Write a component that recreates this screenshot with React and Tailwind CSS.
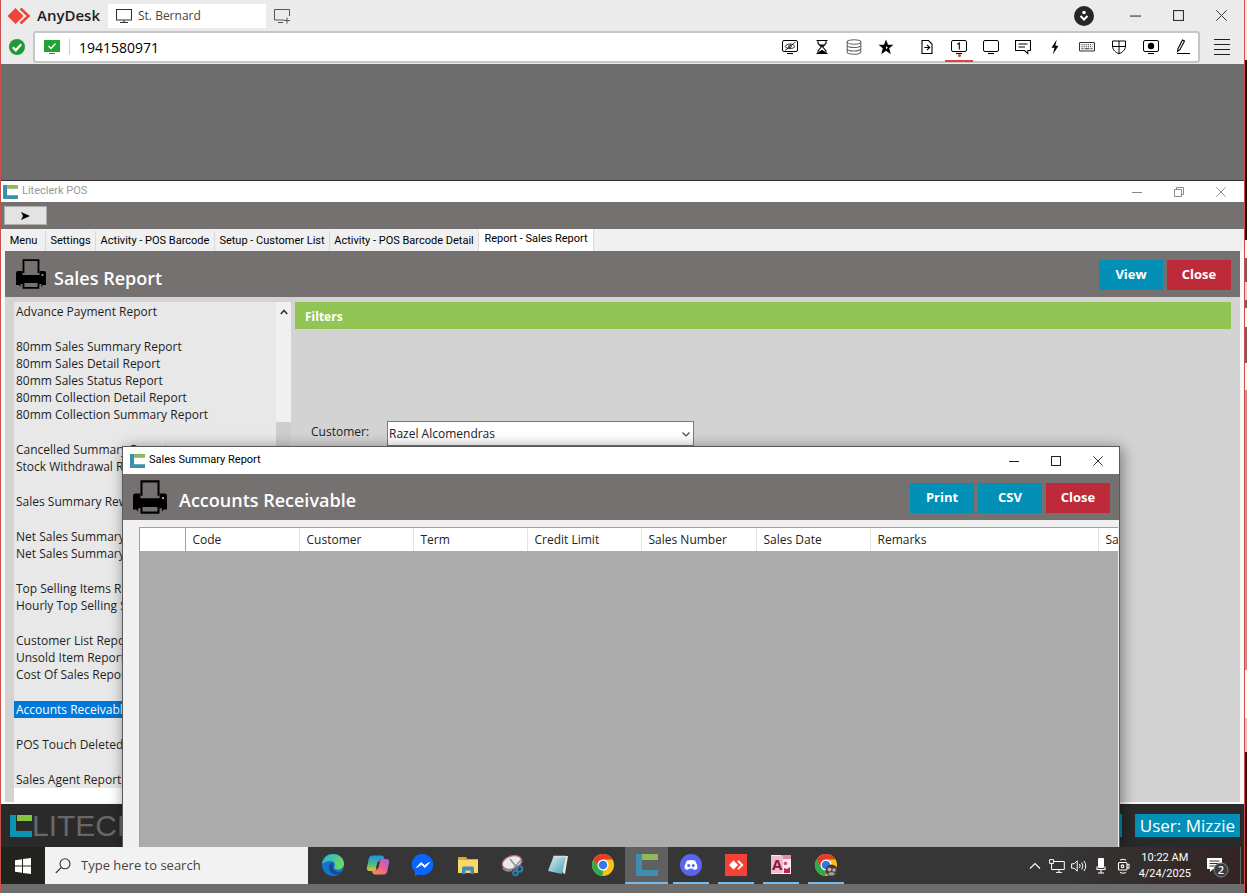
import React from "react";

const reportGroups = [
  ["Advance Payment Report"],
  [
    "80mm Sales Summary Report",
    "80mm Sales Detail Report",
    "80mm Sales Status Report",
    "80mm Collection Detail Report",
    "80mm Collection Summary Report",
  ],
  ["Cancelled Summary Report", "Stock Withdrawal Report"],
  ["Sales Summary Reward Report"],
  ["Net Sales Summary Report", "Net Sales Summary Report - Daily"],
  ["Top Selling Items Report", "Hourly Top Selling Sales Report"],
  ["Customer List Report", "Unsold Item Report", "Cost Of Sales Report"],
  ["Accounts Receivable"],
  ["POS Touch Deleted Item"],
  ["Sales Agent Report"],
];

const tabs = [
  { label: "Menu", width: "w-[44px]" },
  { label: "Settings", width: "w-[50px]" },
  { label: "Activity - POS Barcode", width: "w-[119px]" },
  { label: "Setup - Customer List", width: "w-[115px]" },
  { label: "Activity - POS Barcode Detail", width: "w-[149px]" },
];

const columns = [
  { label: "", width: "w-[45px]" },
  { label: "Code", width: "w-[114px]" },
  { label: "Customer", width: "w-[114px]" },
  { label: "Term", width: "w-[114px]" },
  { label: "Credit Limit", width: "w-[114px]" },
  { label: "Sales Number", width: "w-[115px]" },
  { label: "Sales Date", width: "w-[114px]" },
  { label: "Remarks", width: "w-[228px]" },
  { label: "Sales Amount", width: "w-[114px]" },
];

function Svg({ size = 16, box = 16, className = "", children }) {
  return (
    <svg
      width={size}
      height={size}
      viewBox={`0 0 ${box} ${box}`}
      fill="none"
      stroke="currentColor"
      strokeWidth="1.1"
      className={`shrink-0 ${className}`}
      aria-hidden="true"
    >
      {children}
    </svg>
  );
}

const screen = (
  <>
    <rect x="0.5" y="1.5" width="15" height="11" rx="1.5" strokeWidth="1" />
    <path d="M5 14.500h6" />
  </>
);

const toolIconsLeft = [
  ["Privacy mode", <Svg>{screen}<path d="M3 7.500c2-3.300 8-3.300 10 0c-2 2.800-8 2.800-10 0zM3 11.500L13.500 3" strokeWidth=".8" /><circle cx="8" cy="7.300" r="1.400" strokeWidth=".7" /></Svg>],
  ["Session time", <Svg><path d="M2.500 1.500h11M2.500 14.500h11M4 1.500v2.700L7.200 8L4 12v2.500M12 1.500v2.700L8.800 8L12 12v2.500" /><path d="M5.500 5.500h5L8 8.200zM4.500 14.500v-1.500l3.500-2.300l3.500 2.300v1.500z" fill="currentColor" stroke="none" /></Svg>],
  ["Storage", <Svg className="text-[#666]"><ellipse cx="8" cy="3" rx="6.800" ry="2.200" /><path d="M1.200 3v10c0 3 13.600 3 13.600 0V3M1.200 6.300c0 3 13.600 3 13.600 0M1.200 9.700c0 3 13.600 3 13.600 0" /></Svg>],
  ["Favorite", <Svg><path d="M8 .5l2 5.200h5.500l-4.300 3.600l1.600 5.900L8 11.800l-4.800 3.400l1.600-5.900L.5 5.700H6z" fill="currentColor" stroke="none" /><path d="M8 6.500l.6 1.500h1.500l-1.100 1l.3 1.300L8 9.500z" fill="white" stroke="none" /></Svg>],
];

const toolIconsRight = [
  ["File transfer", <Svg><path d="M3 1.500h6.500l3.500 3.500v9.500H3zM5.300 8.500h5M8 5.800l2.700 2.700L8 11.200" /></Svg>],
  ["Monitor 1", <Svg>{screen}<path d="M6.300 5.300L8.300 4v6.500" /></Svg>],
  ["Display", <Svg>{screen}</Svg>],
  ["Chat", <Svg><path d="M.5 1.500h15v10h-2.700v3l-3.300-3H.5zM3.500 5h9M3.500 8h6.500" /></Svg>],
  ["Actions", <Svg><path d="M9.800.5L4.500 8.700h3L5.800 15.500L11.500 6.800H8.300z" fill="currentColor" stroke="none" /></Svg>],
  ["Keyboard", <Svg className="text-[#333]"><rect x=".5" y="3.500" width="15" height="8.500" rx="1" /><path d="M2.500 5.700h11M2.500 7.700h11" strokeDasharray="1.200 .9" /><path d="M2.500 9.800h2M5.500 9.800h5M11.500 9.800h2" /></Svg>],
  ["Permissions", <Svg><path d="M1.500 2h13v5c0 4-3.300 6.500-6.500 7.800c-3.200-1.300-6.500-3.800-6.500-7.800zM8 2v12.800M1.500 7.500h13" strokeWidth="1" /></Svg>],
  ["Record", <Svg>{screen}<circle cx="8" cy="7" r="3.200" fill="currentColor" stroke="none" /></Svg>],
  ["Whiteboard", <Svg><path d="M2 14.500h13M2.500 12.500l.6-3L7.500 1l2 1L5 10.500z" /></Svg>],
];

function WindowButtons({ className, restore, size = 11 }) {
  return (
    <div className={`flex items-center ${className}`}>
      <button aria-label="Minimize" className="grid place-items-center">
        <Svg size={size} box={10}><path d="M0 5.500h10" strokeWidth="1" /></Svg>
      </button>
      <button aria-label="Maximize" className="grid place-items-center">
        <Svg size={size} box={10}>
          {restore ? <path d="M.5 2.500h7v7h-7zM2.500 2.500v-2h7v7h-2" strokeWidth="1" /> : <rect x=".5" y=".5" width="9" height="9" strokeWidth="1" />}
        </Svg>
      </button>
      <button aria-label="Close window" className="grid place-items-center">
        <Svg size={size} box={10}><path d="M.3.3l9.400 9.400M9.700.3L.3 9.700" strokeWidth=".9" /></Svg>
      </button>
    </div>
  );
}

function LiteclerkMark({ className }) {
  return (
    <svg viewBox="0 0 22 22" preserveAspectRatio="none" className={`shrink-0 ${className}`} aria-hidden="true">
      <path d="M0 0h6v16h16v6H0z" fill="#3d8fb0" />
      <path d="M6 0h16v6H6z" fill="#8fba5c" />
    </svg>
  );
}

function Printer({ className }) {
  return (
    <svg viewBox="0 0 30 30" className={`shrink-0 ${className}`} aria-hidden="true">
      <path d="M7.500 14V1.200h15V14" fill="none" stroke="black" strokeWidth="1.800" />
      <path d="M2 12h4.500v4h17v-4H28q2 0 2 2v12h-3l-1.500 2v-3h-21v3L3 26H0V14q0-2 2-2z" fill="black" />
      <path d="M7.500 23h15v5.800h-15z" fill="#757170" stroke="black" strokeWidth="1.800" />
      <circle cx="26.500" cy="16" r="1" fill="#aaa" />
    </svg>
  );
}

function ActionButton({ color, children }) {
  return (
    <button className={`h-[30px] w-16 text-[13px] font-bold text-white ${color}`}>{children}</button>
  );
}

function Chrome({ children }) {
  return (
    <svg width="24" height="24" viewBox="0 0 24 24" aria-hidden="true">
      <circle cx="12" cy="12" r="11" fill="#fbc116" />
      <path d="M2.500 6.500A11 11 0 0 1 21.500 6.500H12L7.200 14.800z" fill="#e33b2e" />
      <path d="M2.500 6.500L7.300 14.800L12 17.500L11.500 23A11 11 0 0 1 2.500 6.500z" fill="#2da94f" />
      <circle cx="12" cy="12" r="5.500" fill="white" />
      <circle cx="12" cy="12" r="4.300" fill="#3478e8" />
      {children}
    </svg>
  );
}

const apps = [
  {
    name: "Edge",
    icon: (
      <svg width="24" height="24" viewBox="0 0 24 24" aria-hidden="true">
        <defs>
          <linearGradient id="edgeTop" x1="0" y1="0" x2="1" y2=".4"><stop stopColor="#28a9e8" /><stop offset="1" stopColor="#66dc62" /></linearGradient>
        </defs>
        <circle cx="12" cy="12" r="11" fill="#1275c9" />
        <path d="M1 12C1 5.500 6 1 12 1c6.500 0 11 4.500 11 9.500c0 4-3 6-6.500 6c-3 0-4-1.500-3-3c1.500-2.500-.5-5.500-4-5.500c-4 0-8 2-8.500 4z" fill="url(#edgeTop)" />
        <path d="M8.500 12c-2 5 2 9.500 7 9.500c3 0 5-1.500 6.500-3.500c-4 2-9.500 1-10-4c-.2-2 1-2.500 0-3.500c-1.200-1-3 0-3.500 1.500z" fill="#174a97" />
      </svg>
    ),
  },
  {
    name: "Copilot",
    icon: (
      <svg width="24" height="24" viewBox="0 0 24 24" aria-hidden="true">
        <defs>
          <linearGradient id="copA" x1="0" y1="0" x2="0" y2="1"><stop stopColor="#1d8fe6" /><stop offset=".6" stopColor="#57bb7d" /><stop offset="1" stopColor="#e8c52e" /></linearGradient>
          <linearGradient id="copB" x1="1" y1="0" x2="0" y2="1"><stop stopColor="#a45bea" /><stop offset=".5" stopColor="#f0628a" /><stop offset="1" stopColor="#f79a4e" /></linearGradient>
        </defs>
        <path d="M6 2.500h9.500q2 0 2.500 2l.5 2h-4q-1.500 0-2 2L10.500 16q-.6 2-2.500 2H4q-4 0-3-4L3 5q.7-2.500 3-2.500z" fill="url(#copA)" />
        <path d="M18 21.500H9q-2 0-2.500-2L6 17.500h3.500q1.500 0 2-2L13.500 8q.6-2 2.500-2h4q4 0 3 4l-2 9q-.7 2.500-3 2.500z" fill="url(#copB)" />
        <path d="M11.500 9h2.500l-1.800 6.500H9.800z" fill="#363636" />
      </svg>
    ),
  },
  {
    name: "Messenger",
    icon: (
      <svg width="24" height="24" viewBox="0 0 24 24" aria-hidden="true">
        <path d="M12 1a11 10.500 0 1 1-4 20.500L4 23v-4A10.500 10.500 0 0 1 12 1z" fill="#0a66ff" />
        <path d="M5.500 14.500l4.500-5l3.500 3l5-3l-4.500 5l-3.500-3z" fill="white" stroke="white" strokeLinejoin="round" />
      </svg>
    ),
  },
  {
    name: "File Explorer",
    icon: (
      <svg width="24" height="24" viewBox="0 0 24 24" aria-hidden="true">
        <path d="M2 4h8l1.500 2H22v14H2z" fill="#e3a62b" />
        <path d="M2 7h20v13H2z" fill="#fbd968" />
        <path d="M6 21v-6q0-1.500 1.500-1.500h9q1.500 0 1.500 1.500v6h-3.500v-3.500h-5V21z" fill="#3d8cc4" />
      </svg>
    ),
  },
  {
    name: "Snipping Tool",
    icon: (
      <svg width="24" height="24" viewBox="0 0 24 24" aria-hidden="true">
        <ellipse cx="11" cy="9.500" rx="10" ry="6.500" transform="rotate(-18 11 9.500)" fill="#e9e9ec" stroke="#b96c72" strokeWidth="1.300" />
        <path d="M2 15q3 4 9 2" stroke="#8d8d94" strokeWidth="2" fill="none" />
        <path d="M9 6l8 10M20 7l-8 9" stroke="#8b9097" strokeWidth="1.400" />
        <circle cx="18.500" cy="16" r="2.800" fill="none" stroke="#2e7fb2" strokeWidth="2" />
        <circle cx="14.500" cy="20" r="2.300" fill="none" stroke="#2e7fb2" strokeWidth="2" />
      </svg>
    ),
  },
  {
    name: "Notepad",
    icon: (
      <svg width="24" height="24" viewBox="0 0 24 24" aria-hidden="true">
        <defs><linearGradient id="note" x1="0" y1="0" x2="1" y2="1"><stop stopColor="#d8f1f5" /><stop offset="1" stopColor="#4a9db5" /></linearGradient></defs>
        <path d="M8 3h14l-3 18l-2-1z" fill="#e8e5dc" />
        <path d="M7.500 3.500H20L16 21L2 18z" fill="url(#note)" />
        <path d="M7.500 3.500H20" stroke="#dfe6e8" strokeWidth="2" strokeDasharray="1 1" />
      </svg>
    ),
  },
  { name: "Chrome", icon: <Chrome /> },
  { name: "Liteclerk POS", icon: <LiteclerkMark className="h-[22px] w-[22px]" />, state: "active" },
  {
    name: "Discord",
    state: "open",
    icon: (
      <svg width="24" height="24" viewBox="0 0 24 24" aria-hidden="true">
        <circle cx="12" cy="12" r="11" fill="#5865f2" />
        <path d="M8 7.500q4-1 8 0q2.500 4 2.500 8q-1.500 1.300-3.500 1.500l-1-1.500q-2 .5-4 0L9 17q-2-.2-3.500-1.500q0-4 2.500-8z" fill="white" />
        <circle cx="9.700" cy="12.500" r="1.500" fill="#5865f2" />
        <circle cx="14.300" cy="12.500" r="1.500" fill="#5865f2" />
      </svg>
    ),
  },
  {
    name: "AnyDesk",
    state: "open",
    icon: (
      <svg width="24" height="24" viewBox="0 0 24 24" aria-hidden="true">
        <path d="M1 1h22v22H1z" fill="#f44336" />
        <path d="M9.500 7.500L14 12l-4.500 4.500L5 12z" fill="white" />
        <path d="M14 7.800l4.200 4.200l-4.200 4.200" fill="none" stroke="white" strokeWidth="1.800" />
      </svg>
    ),
  },
  {
    name: "Access",
    state: "open",
    icon: (
      <svg width="24" height="24" viewBox="0 0 24 24" aria-hidden="true">
        <path d="M2 2h20v19H2z" fill="#fbe9ef" />
        <path d="M12 2h10v4H12z" fill="#e08bab" />
        <path d="M2 3h12v17H2z" fill="#f3bccd" />
        <path d="M15 20v-5l3 1l3-2v6z" fill="#b5285c" />
        <text x="3" y="17" fontSize="15" fontWeight="bold" fill="#8c1740" stroke="none" fontFamily="Open Sans, sans-serif">A</text>
        <circle cx="16.500" cy="10.500" r="1.800" fill="#c5517c" />
      </svg>
    ),
  },
  {
    name: "Chrome profile",
    state: "open",
    icon: (
      <Chrome>
        <circle cx="17.500" cy="17.500" r="6" fill="#4a3a35" />
        <circle cx="15.500" cy="16.500" r="2" fill="#c9a793" />
        <circle cx="20" cy="17" r="1.800" fill="#b8a8a8" />
        <path d="M13.500 21q4-4 8 0q-4 3-8 0z" fill="#93a0ad" />
      </Chrome>
    ),
  },
];

function AnyDeskChrome() {
  return (
    <header className="bg-[#ebebeb] text-[#1e1e1e]">
      <div className="flex h-[31px] items-center">
        <div className="flex w-[107px] items-center gap-[6px] pl-[6px]">
          <svg width="24" height="18" viewBox="0 0 24 18" className="shrink-0" aria-hidden="true">
            <path d="M8.500 1l8 8l-8 8l-8-8z" fill="#ef443b" />
            <path d="M13.500 1.500L21.500 9l-8 7.500" fill="none" stroke="#ef443b" strokeWidth="2.600" />
          </svg>
          <span className="text-[15px] font-semibold">AnyDesk</span>
        </div>
        <button className="flex h-6 w-[158px] items-center gap-[6px] bg-white pl-2 text-[12px] text-[#444]">
          <Svg className="text-[#333]"><path d="M.5 1.500h15v10.500H.5zM8 12v2.500M4 14.500h8" /></Svg>
          St. Bernard
        </button>
        <button aria-label="New session" className="ml-2 text-[#555]">
          <Svg><path d="M10 12H.5V1.500h15V8M4 14.500h5M10 12.500h6M13 9.500v6" strokeWidth="1" /></Svg>
        </button>
        <div className="ml-auto flex items-center gap-[36px] pr-[17px]">
          <Svg size={20} box={20}>
            <circle cx="10" cy="10" r="10" fill="#262626" stroke="none" />
            <circle cx="10" cy="6.500" r="1.800" fill="white" stroke="none" />
            <path d="M6.500 10l3.500 3.500l3.500-3.500" stroke="white" strokeWidth="2" />
          </Svg>
          <WindowButtons className="gap-8 text-[#333]" size={11} />
        </div>
      </div>
      <div className="flex h-[33px] items-center pl-2 pb-px">
        <svg width="16" height="16" viewBox="0 0 16 16" className="shrink-0" aria-hidden="true">
          <circle cx="8" cy="8" r="8" fill="#1f9a35" />
          <path d="M3.800 8.300l3 3l5.400-6" fill="none" stroke="white" strokeWidth="2.200" />
        </svg>
        <div className="ml-2 flex h-8 flex-1 items-center rounded-[3px] border-2 border-[#c6c6c6] bg-white pl-[9px] pr-[7px]">
          <svg width="16" height="14" viewBox="0 0 16 14" className="shrink-0" aria-hidden="true">
            <path d="M0 0h16v12H0zM5 13h6v1H5z" fill="#21a335" />
            <path d="M4.500 6l2.500 2.500l4.500-5" fill="none" stroke="white" strokeWidth="1.300" />
          </svg>
          <span className="ml-[9px] h-4 w-px bg-[#ccc]" />
          <input aria-label="Remote address" defaultValue="1941580971" className="ml-[9px] w-32 min-w-0 flex-1 bg-transparent text-[14px] text-black outline-none" />
          <div className="flex gap-4 text-black">
            {toolIconsLeft.map(([name, icon]) => (
              <button key={name} aria-label={name}>{icon}</button>
            ))}
          </div>
          <div className="ml-[25px] flex gap-4 text-black">
            {toolIconsRight.map(([name, icon]) => (
              <button key={name} aria-label={name} className="relative">
                {icon}
                {name === "Monitor 1" && (
                  <>
                    <span className="absolute -bottom-[2px] left-[7px] size-[3px] rounded-full bg-[#e0433c]" />
                    <span className="absolute -bottom-[7px] -left-[6px] h-[2px] w-7 bg-[#e0433c]" />
                  </>
                )}
              </button>
            ))}
          </div>
        </div>
        <button aria-label="Main menu" className="mx-[14px]">
          <Svg><path d="M0 .5h16M0 5.500h16M0 10.500h16M0 15.500h16" strokeWidth="1" /></Svg>
        </button>
      </div>
    </header>
  );
}

function ReportList() {
  return (
    <div className="flex min-h-0 border-l-9 border-[#d3d3d3] bg-white text-[12px] leading-[17px] text-[#1f1f1f]">
      <div className="w-[262px]">
        <div className="flex flex-col gap-[18px] bg-[#e8e8e8] pt-px">
          {reportGroups.map((group) => (
            <ul key={group[0]}>
              {group.map((item) => (
                <li key={item} className="h-[17px]">
                  <button
                    className={
                      item === "Accounts Receivable"
                        ? "block w-full bg-[#0078d7] pl-[2px] text-left text-white"
                        : "block w-full pl-[2px] text-left"
                    }
                  >
                    {item}
                  </button>
                </li>
              ))}
            </ul>
          ))}
        </div>
      </div>
      <div className="flex w-[15px] flex-col items-center bg-[#f0f0f0]">
        <button aria-label="Scroll up" className="h-4 pt-[3px]">
          <Svg size={8} box={8} className="text-[#333]"><path d="M.8 6L4 2.500L7.200 6" strokeWidth="1.600" /></Svg>
        </button>
        <span className="mt-[104px] w-full flex-1 bg-[#cdcdcd]" />
      </div>
    </div>
  );
}

function ReceivablesDialog() {
  return (
    <section
      aria-label="Sales Summary Report"
      className="absolute bottom-0 left-[121px] right-[124px] top-[265px] flex flex-col border border-b-0 border-[#5a5a5a] bg-[#f0f0f0] shadow-[2px_2px_14px_rgba(0,0,0,0.45)]"
    >
      <div className="flex h-[27px] items-center bg-white pl-[7px]">
        <LiteclerkMark className="h-[14px] w-[15px]" />
        <h2 className="ml-1 text-[11px] text-black [font-family:Roboto,sans-serif]">Sales Summary Report</h2>
        <WindowButtons className="ml-auto gap-8 pr-4 text-[#222]" size={10} />
      </div>
      <div className="flex h-[46px] items-center bg-[#757170] pl-[10px] pr-[9px]">
        <Printer className="size-[34px]" />
        <h1 className="ml-3 pt-[6px] text-[18px] font-semibold text-white">Accounts Receivable</h1>
        <div className="ml-auto flex gap-1 pt-[2px]">
          <ActionButton color="bg-[#0390b7]">Print</ActionButton>
          <ActionButton color="bg-[#0390b7]">CSV</ActionButton>
          <ActionButton color="bg-[#be2a3a]">Close</ActionButton>
        </div>
      </div>
      <div className="ml-4 mr-px mt-[7px] flex-1 overflow-hidden border-l border-t border-[#a0a0a0] bg-[#ababab]">
        <table className="w-[1072px] table-fixed border-collapse bg-white text-[12px] text-[#222]">
          <thead>
            <tr className="h-[23px]">
              {columns.map((c, i) => (
                <th
                  key={c.label}
                  scope="col"
                  className={`${c.width} whitespace-nowrap border-r pl-[7px] text-left font-normal ${i === 0 ? "border-[#a0a0a0]" : "border-[#e3e3e3]"}`}
                >
                  {c.label}
                </th>
              ))}
            </tr>
          </thead>
        </table>
      </div>
    </section>
  );
}

function PosWindow() {
  return (
    <main className="relative flex flex-1 flex-col overflow-hidden border-t border-[#333] bg-[#f0f0f0]">
      <div className="flex h-[21px] items-center bg-white pl-[2px]">
        <LiteclerkMark className="h-[14px] w-[15px]" />
        <span className="ml-1 text-[11px] text-[#999] [font-family:Roboto,sans-serif]">Liteclerk POS</span>
        <WindowButtons className="ml-auto gap-8 pr-[18px] text-[#888]" restore size={10} />
      </div>
      <div className="flex h-[27px] items-center bg-[#757170] pl-[3px]">
        <button aria-label="Run" className="grid h-[19px] w-[43px] place-items-center border border-[#adadad] bg-[#e3e3e3]">
          <svg width="9" height="8" viewBox="0 0 9 8" aria-hidden="true"><path d="M0 0l9 4l-9 4l2-4z" fill="black" /></svg>
        </button>
      </div>
      <nav className="flex h-[22px] items-end pl-px text-[11px] text-black [font-family:Roboto,sans-serif]">
        {tabs.map((t) => (
          <button key={t.label} className={`h-[20px] shrink-0 whitespace-nowrap border-r border-[#d9d9d9] ${t.width}`}>{t.label}</button>
        ))}
        <button className="h-[22px] w-[115px] whitespace-nowrap border-r border-[#d9d9d9] bg-white pb-px">Report - Sales Report</button>
      </nav>
      <div className="flex flex-1 flex-col border-x-4 border-b-2 border-[#f8f8f8] bg-[#d3d3d3]">
        <div className="flex h-[46px] items-center bg-[#757170] pl-[11px] pr-[9px]">
          <Printer className="size-[30px]" />
          <h1 className="ml-2 pt-[8px] text-[18px] font-semibold text-white">Sales Report</h1>
          <div className="ml-auto flex gap-1 pt-[2px]">
            <ActionButton color="bg-[#0390b7]">View</ActionButton>
            <ActionButton color="bg-[#be2a3a]">Close</ActionButton>
          </div>
        </div>
        <div className="flex flex-1 pr-[9px] pt-[5px]">
          <ReportList />
          <div className="ml-1 flex-1">
            <h2 className="flex h-[27px] items-center bg-[#92c456] pl-[10px] pt-[2px] text-[12px] font-bold text-white">Filters</h2>
            <div className="mt-[92px] flex items-center pl-4 text-[12px] text-[#222]">
              <label htmlFor="customer" className="w-[76px] pb-1">Customer:</label>
              <div className="relative w-[307px]">
                <select id="customer" className="h-[25px] w-full appearance-none border border-[#7a7a7a] bg-white pl-px text-[12px] text-[#222]">
                  <option>Razel Alcomendras</option>
                </select>
                <Svg size={8} box={8} className="pointer-events-none absolute right-1 top-[9px] text-[#444]"><path d="M.5 2.500L4 6L7.500 2.500" /></Svg>
              </div>
            </div>
          </div>
        </div>
      </div>
      <footer className="flex h-[43px] shrink-0 items-center bg-[#2a2a2a] pl-[9px] pr-1">
        <svg width="22" height="22" viewBox="0 0 22 22" className="shrink-0" aria-hidden="true">
          <path d="M0 0h6v16h16v6H0z" fill="#0d93b5" />
          <path d="M7 0h15v6H7z" fill="#86c440" />
        </svg>
        <span className="text-[30px] leading-none text-[#686868] [font-family:'Liberation_Sans',sans-serif]">LITECLERK</span>
        <span className="ml-auto mr-[13px] h-[23px] w-24 bg-[#0390b7]" />
        <span className="flex h-[23px] items-center bg-[#0390b7] px-[5px] pt-px text-[17px] text-white">User: Mizzie</span>
      </footer>
      <ReceivablesDialog />
    </main>
  );
}

function Taskbar() {
  return (
    <footer className="flex h-[37px] items-stretch bg-linear-to-r from-[#363636] from-85% to-[#332424] text-white">
      <button aria-label="Start" className="grid w-11 place-items-center bg-[#20241c]">
        <svg width="16" height="16" viewBox="0 0 16 16" aria-hidden="true">
          <path d="M0 2.200l7-1v6.300H0zM8 1l8-1v7.500H8zM0 8.500h7v6.300l-7-1zM8 8.500h8V16l-8-1z" fill="white" />
        </svg>
      </button>
      <label className="flex w-[263px] items-center bg-[#f2f2f2] pl-[10px] text-[#333]">
        <Svg><circle cx="10" cy="5.800" r="5" /><path d="M6.400 9.400L.8 15" /></Svg>
        <input placeholder="Type here to search" aria-label="Search" className="ml-[10px] w-48 bg-transparent text-[13px] outline-none placeholder:text-[#444]" />
      </label>
      <div className="ml-[2px] flex">
        {apps.map((app) => (
          <button
            key={app.name}
            aria-label={app.name}
            className={
              app.state === "active"
                ? "flex w-[43px] flex-col items-center border-b-2 border-[#76b9ed] bg-[#606060] pt-[7px]"
                : "flex w-[45px] flex-col items-center pt-[6px]"
            }
          >
            {app.icon}
            {app.state === "open" && <span className="mt-auto h-[2px] w-9 bg-[#76b9ed]" />}
          </button>
        ))}
      </div>
      <div className="ml-auto flex items-center pr-[3px]">
        <Svg size={12} box={12}><path d="M1 8.500l5-5l5 5" /></Svg>
        <Svg className="ml-2"><path d="M5 3.500h10.300v8H5M10 11.500V14M7 14.400h6M.6 1.600h4v3.800h-4zM2.600 5.400v6.200h3" strokeWidth="1" /></Svg>
        <Svg className="ml-[6px]"><path d="M.6 5.800h2.600l3-3v10.400l-3-3H.6zM8.500 6q1.300 2 0 4M10.700 4.500q2.400 3.500 0 7M13 3q3.500 5 0 10" strokeWidth="1" /></Svg>
        <Svg className="ml-[6px]"><rect x="5" y="0" width="6" height="10" rx="1" fill="white" stroke="none" /><path d="M4 8.500v3h8v-3M8 11.500V15M5 15h6" /></Svg>
        <Svg className="ml-[6px]"><rect x="3.500" y="4.500" width="8.500" height="7.500" rx="1" /><circle cx="7.500" cy="8.200" r="1.300" /><path d="M12 7l2-1v4.500L12 9.500M5 2q3-1.500 6 0M5 14.500q3 1.500 6 0" strokeWidth="1" /></Svg>
        <time className="ml-2 flex flex-col items-center text-[11px] leading-[16px] [font-family:Roboto,sans-serif]">
          <span>10:22 AM</span>
          <span>4/24/2025</span>
        </time>
        <button aria-label="Notifications" className="relative ml-4 mr-[11px]">
          <svg width="22" height="24" viewBox="0 0 22 24" aria-hidden="true">
            <path d="M0 4h15v11H6l-3 3v-3H0z" fill="white" />
            <path d="M2.500 7h10M2.500 9.500h10M2.500 12h7" stroke="#333" />
            <circle cx="14" cy="16" r="7" fill="#3b3b3b" stroke="#888" />
          </svg>
          <span className="absolute left-[7px] top-[8px] w-[14px] text-center text-[11px] font-semibold leading-[16px]">2</span>
        </button>
        <span className="h-full w-px bg-[#666]" />
      </div>
    </footer>
  );
}

export default function App() {
  return (
    <div className="flex h-screen overflow-hidden [font-family:'Open_Sans','Noto_Sans',sans-serif]">
      <div className="flex min-w-0 flex-1 flex-col border-x border-[#c94f4b] bg-[#6d6d6d]">
        <AnyDeskChrome />
        <div className="h-[116px]" />
        <PosWindow />
        <Taskbar />
        <div className="h-[9px]" />
      </div>
      <div className="flex w-[2px] flex-col bg-[#3a0d12]">
        <span className="h-[60px] bg-[#f8e4e4]" />
        <span className="h-[180px] bg-[#2b0d10]" />
        <span className="h-[18px] bg-[#fdf3f3]" />
        <span className="h-6 bg-[#8a5555]" />
        <span className="h-[18px] bg-[#f6cccc]" />
        <span className="h-2 bg-[#8a5555]" />
        <span className="h-[19px] bg-[#fdf3f3]" />
        <span className="h-9 bg-[#8a5555]" />
        <span className="h-[27px] bg-[#fdf3f3]" />
        <span className="h-[280px] bg-[#dc8484]" />
        <span className="h-12 bg-[#fff5f5]" />
        <span className="h-[34px] bg-[#eebcbc]" />
      </div>
    </div>
  );
}
